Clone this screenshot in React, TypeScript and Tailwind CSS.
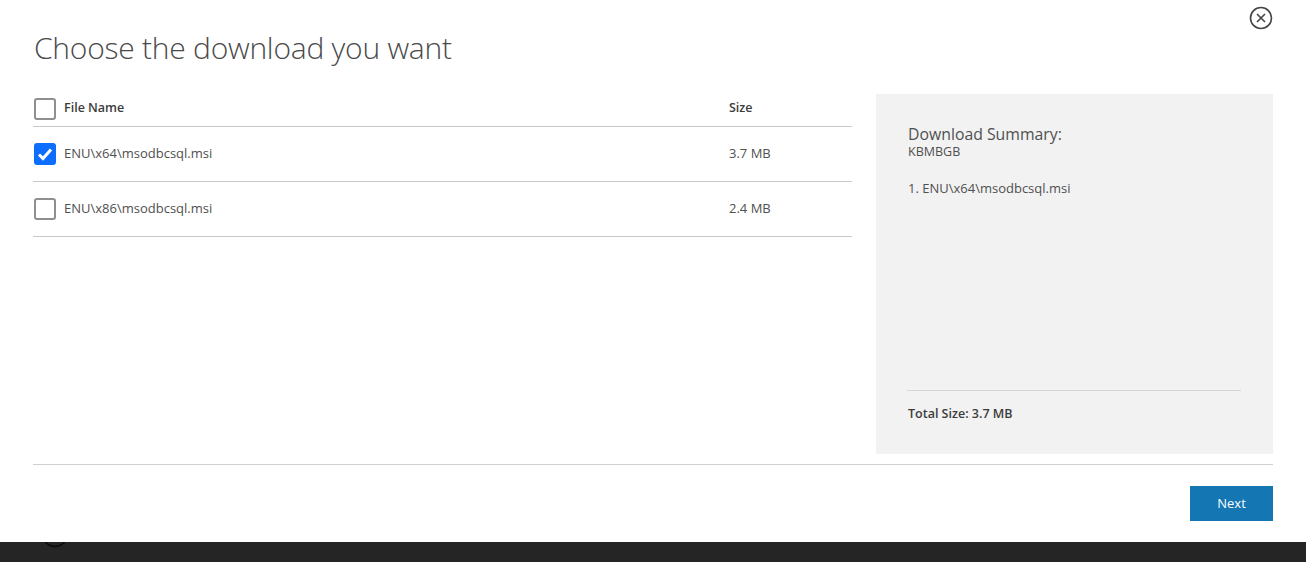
const files = [
  { name: 'ENU\\x64\\msodbcsql.msi', size: '3.7 MB', checked: true },
  { name: 'ENU\\x86\\msodbcsql.msi', size: '2.4 MB', checked: false },
];

function Checkbox({ checked }: { checked: boolean }) {
  if (checked) {
    return (
      <div className="w-[22px] h-[22px] rounded-[3px] bg-[#0d6efd] flex items-center justify-center">
        <svg width="18" height="18" viewBox="0 0 18 18" fill="none">
          <path d="M3 9.5l4 4L15 4.5" stroke="#fff" strokeWidth="3" />
        </svg>
      </div>
    );
  }
  return <div className="w-[22px] h-[22px] rounded-[3px] border-2 border-[#8f8f8f] bg-white" />;
}

export default function App() {
  return (
    <div className="w-full h-[562px] overflow-hidden flex flex-col font-['Open_Sans',sans-serif] text-[#505050]">
      <div className="relative h-[542px] shrink-0 bg-white px-[33px]">
        {/* close button */}
        <button className="absolute top-[6px] right-[33px] text-[#444]">
          <svg width="24" height="24" viewBox="0 0 24 24" fill="none" stroke="currentColor">
            <circle cx="12" cy="12" r="10.5" strokeWidth="1.6" />
            <path d="M8 8l8 8M16 8l-8 8" strokeWidth="1.6" />
          </svg>
        </button>

        <h1 className="pt-[27px] h-[94px] text-[30px] leading-[42px] font-light tracking-[-0.25px] text-[#4a4a4a] pl-px">
          Choose the download you want
        </h1>

        <div className="flex h-[360px]">
          <div className="w-[819px]">
            <div className="grid grid-cols-[30px_1fr_123px] items-center h-[33px] pb-[2px] border-b border-[#c8c8c8] pl-px">
              <Checkbox checked={false} />
              <span className="text-[12.5px] -mt-px font-semibold text-[#3c3c3c]">File Name</span>
              <span className="text-[12.5px] -mt-px font-semibold text-[#3c3c3c]">Size</span>
            </div>
            {files.map((file) => (
              <div
                key={file.name}
                className="grid grid-cols-[30px_1fr_123px] items-center h-[55px] border-b border-[#c8c8c8] pl-px"
              >
                <Checkbox checked={file.checked} />
                <span className="text-[13px]">{file.name}</span>
                <span className="text-[13px]">{file.size}</span>
              </div>
            ))}
          </div>

          <div className="ml-[24px] w-[397px] bg-[#f2f2f2] px-[32px] pt-[30px] pb-[32px] flex flex-col">
            <div className="text-[15.8px] leading-[20px]">Download Summary:</div>
            <div className="text-[12.5px] leading-[16px]">KBMBGB</div>
            <div className="mt-[20px] text-[13px] leading-[16px]">1. ENU\x64\msodbcsql.msi</div>
            <div className="mt-auto border-t border-[#d6d6d6] pt-[14px] -ml-px">
              <span className="block text-[12.5px] leading-[17px] font-semibold text-[#3c3c3c] pl-px">
                Total Size: 3.7 MB
              </span>
            </div>
          </div>
        </div>

        <div className="mt-[10px] border-t border-[#cfcfcf] pt-[21px] flex justify-end">
          <button className="w-[83px] h-[35px] bg-[#1477b4] text-white text-[13px]">Next</button>
        </div>
      </div>

      <div className="relative h-[20px] bg-[#252525] overflow-hidden">
        <svg className="absolute left-[41px] -top-[22px]" width="28" height="28" viewBox="0 0 28 28" fill="none">
          <circle cx="14" cy="14" r="12.5" stroke="#0a0a0a" strokeWidth="1.5" />
        </svg>
      </div>
    </div>
  );
}
